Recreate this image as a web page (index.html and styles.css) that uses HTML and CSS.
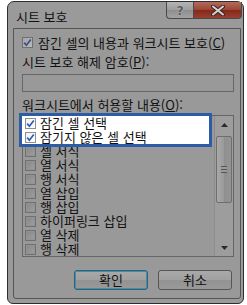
FILE: index.html
```html
<!DOCTYPE html>
<html lang="ko">
<head>
    <meta charset="UTF-8">
    <meta name="viewport" content="width=device-width, initial-scale=1.0">
    <title>시트 보호</title>
    <link rel="stylesheet" href="styles.css">
</head>
<body>

<div class="dialog">
    <div class="titlebar">
        <span class="title">시트 보호</span>
        <div class="caption-buttons">
            <div class="cap cap-help">?</div>
            <div class="cap cap-close">
                <svg width="14" height="11" viewBox="0 0 14 11">
                    <path d="M2 1.5 L12 9.5 M12 1.5 L2 9.5" stroke="#3a2a26" stroke-width="4" stroke-linecap="round"/>
                    <path d="M2 1.5 L12 9.5 M12 1.5 L2 9.5" stroke="#d8d2cf" stroke-width="2" stroke-linecap="round"/>
                </svg>
            </div>
        </div>
    </div>

    <div class="client">
        <div class="top-check">
            <span class="box checked">
                <svg width="9" height="9" viewBox="0 0 9 9"><path d="M1.2 4.6 L3.4 7.2 L7.8 1.4" fill="none" stroke="#35508a" stroke-width="1.7"/></svg>
            </span>
            <span>잠긴 셀의 내용과 워크시트 보호(<u>C</u>)</span>
        </div>
        <div class="label">시트 보호 해제 암호(<u>P</u>):</div>
        <div class="password"></div>
        <div class="label label-list">워크시트에서 허용할 내용(<u>O</u>):</div>

        <div class="list">
            <div class="items">
                <div class="highlight">
                    <div class="item">
                        <span class="box white">
                            <svg width="9" height="9" viewBox="0 0 9 9"><path d="M1.2 4.6 L3.4 7.2 L7.8 1.4" fill="none" stroke="#2f5bb8" stroke-width="1.7"/></svg>
                        </span>잠긴 셀 선택
                    </div>
                    <div class="item">
                        <span class="box white">
                            <svg width="9" height="9" viewBox="0 0 9 9"><path d="M1.2 4.6 L3.4 7.2 L7.8 1.4" fill="none" stroke="#2f5bb8" stroke-width="1.7"/></svg>
                        </span>잠기지 않은 셀 선택
                    </div>
                </div>
                <div class="item"><span class="box"></span>셀 서식</div>
                <div class="item"><span class="box"></span>열 서식</div>
                <div class="item"><span class="box"></span>행 서식</div>
                <div class="item"><span class="box"></span>열 삽입</div>
                <div class="item"><span class="box"></span>행 삽입</div>
                <div class="item"><span class="box"></span>하이퍼링크 삽입</div>
                <div class="item"><span class="box"></span>열 삭제</div>
                <div class="item"><span class="box"></span>행 삭제</div>
            </div>
            <div class="scrollbar">
                <div class="arrow">
                    <svg width="7" height="4" viewBox="0 0 7 4"><path d="M0 4 L3.5 0 L7 4 Z" fill="#2a2a2a"/></svg>
                </div>
                <div class="thumb">
                    <span class="grip"></span>
                </div>
                <div class="track"></div>
                <div class="arrow">
                    <svg width="7" height="4" viewBox="0 0 7 4"><path d="M0 0 L3.5 4 L7 0 Z" fill="#2a2a2a"/></svg>
                </div>
            </div>
        </div>

        <div class="buttons">
            <div class="btn btn-default">확인</div>
            <div class="btn">취소</div>
        </div>
    </div>
</div>

</body>
</html>
```

FILE: styles.css
```css
body {
    margin: 0;
    background-color: #fff;
    font-family: "Noto Sans CJK KR", "DejaVu Sans", sans-serif;
    font-size: 13px;
    color: #111;
}
.dialog {
    box-sizing: border-box;
    width: 237px;
    height: 303px;
    margin: 1px 0 0 7px;
    border: 1px solid #2e2e2e;
    border-radius: 7px 7px 6px 6px;
    background-color: #9a9a9a;
    display: flex;
    flex-direction: column;
}
.titlebar {
    height: 26px;
    display: flex;
    justify-content: space-between;
    align-items: flex-start;
}
.title {
    margin: 7px 0 0 8px;
    line-height: 15px;
}
.caption-buttons {
    display: flex;
    margin-right: 1px;
}
.cap {
    box-sizing: border-box;
    height: 17px;
    border: 1px solid #4a4a4a;
    border-top: none;
    display: flex;
    align-items: center;
    justify-content: center;
}
.cap-help {
    width: 27px;
    border-radius: 0 0 0 4px;
    border-right: none;
    background: linear-gradient(#b4b4b4, #9c9c9c 50%, #8e8e8e 51%, #a2a2a2);
    color: #5a5a5a;
    font-family: "DejaVu Sans", sans-serif;
    font-size: 13px;
    font-weight: bold;
    text-shadow: 0 0 1px #eee;
}
.cap-close {
    width: 49px;
    border-radius: 0 0 4px 0;
    background: linear-gradient(#b46a5c, #9b4534 50%, #84281a 51%, #9a4030);
}
.client {
    box-sizing: border-box;
    flex: 1;
    margin: 0 2px 4px 5px;
    padding: 6px 6px 8px 8px;
    border: 1px solid #555;
    border-radius: 0 0 3px 3px;
    background-color: #999;
    display: flex;
    flex-direction: column;
}
.top-check {
    display: flex;
    align-items: center;
    gap: 5px;
    height: 15px;
    line-height: 15px;
}
.label {
    margin-top: 4px;
    line-height: 15px;
}
.label-list {
    margin-top: 5px;
}
.password {
    box-sizing: border-box;
    height: 18px;
    margin-top: 5px;
    border: 1px solid #666;
}
.box {
    box-sizing: border-box;
    width: 11px;
    height: 11px;
    flex: none;
    border: 1px solid #707070;
    background: linear-gradient(135deg, #858585, #a0a0a0);
    box-shadow: inset 0 0 0 1px #929292;
    display: flex;
    align-items: center;
    justify-content: center;
}
.box.checked {
    background: linear-gradient(135deg, #a5a5a5, #b9b9b9);
    box-shadow: none;
}
.box.white {
    border-color: #8e8f8f;
    background: linear-gradient(135deg, #f1f1f1, #fff);
    box-shadow: none;
}
.list {
    box-sizing: border-box;
    height: 142px;
    margin-top: 3px;
    border: 1px solid #666;
    display: flex;
}
.items {
    width: 191px;
}
.item {
    height: 14px;
    line-height: 14px;
    padding-left: 2px;
    display: flex;
    align-items: center;
    gap: 4px;
}
.highlight {
    position: relative;
    width: 193px;
    box-sizing: border-box;
    margin: -3px 0 -3px -4px;
    border: 3px solid #2d5ca6;
    background-color: #fff;
}
.highlight .item {
    padding-left: 3px;
}
.scrollbar {
    flex: 1;
    display: flex;
    flex-direction: column;
    align-items: center;
    border-left: 1px solid #8c8c8c;
    background-color: #9d9d9d;
}
.arrow {
    height: 17px;
    display: flex;
    align-items: center;
    justify-content: center;
}
.thumb {
    box-sizing: border-box;
    width: 16px;
    height: 67px;
    margin-top: 3px;
    border: 1px solid #6e6e6e;
    border-radius: 2px;
    background: linear-gradient(90deg, #a8a8a8, #9a9a9a 50%, #8f8f8f 51%, #959595);
    display: flex;
    align-items: center;
    justify-content: center;
}
.grip {
    width: 6px;
    height: 5px;
    border-top: 1px solid #555;
    border-bottom: 1px solid #555;
    background: linear-gradient(#9a9a9a 40%, #555 40%, #555 60%, #9a9a9a 60%);
}
.track {
    flex: 1;
}
.buttons {
    display: flex;
    justify-content: flex-end;
    gap: 10px;
    margin-top: 13px;
    padding-right: 2px;
}
.btn {
    box-sizing: border-box;
    width: 74px;
    height: 20px;
    border: 1px solid #555;
    border-radius: 3px;
    background: linear-gradient(#a9a9a9, #a0a0a0 50%, #939393 51%, #999);
    text-align: center;
    line-height: 18px;
}
.btn-default {
    border-color: #2a6380;
    box-shadow: inset 0 0 0 1px #4e8aa4;
}
```
